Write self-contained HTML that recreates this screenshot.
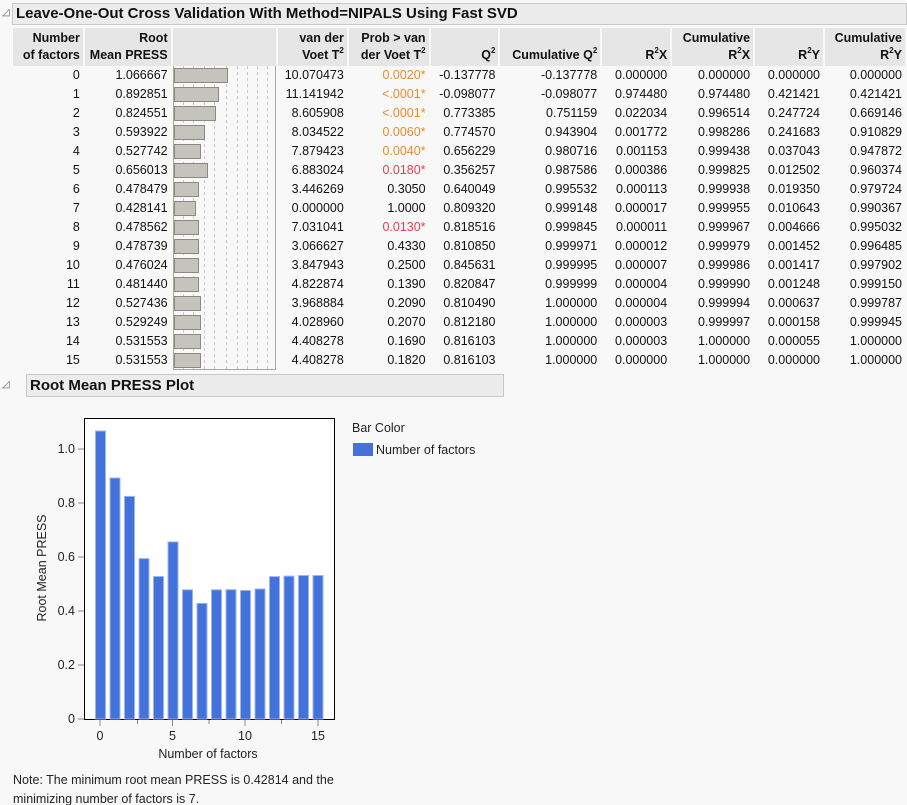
<!DOCTYPE html>
<html><head><meta charset="utf-8"><style>
body{margin:0;width:907px;height:805px;background:#f8f8f8;font-family:"Liberation Sans",sans-serif;font-size:12.5px;color:#111;position:relative;overflow:hidden}
.tb{position:absolute;background:#ececec;border:1px solid #c8c8c8;font-weight:bold;font-size:15px;line-height:20px;padding-left:3px;box-sizing:border-box}
.tri{position:absolute;font-size:10px;color:#666}
table{position:absolute;left:11px;top:28px;border-collapse:separate;border-spacing:2px 0;table-layout:fixed}
th{background:#e6e6e6;font-weight:bold;text-align:right;vertical-align:bottom;height:36px;padding:0 3px 2px 0;line-height:17px;font-size:12.5px;overflow:hidden}
td{height:19px;padding:0 3px 0 0;text-align:right;line-height:19px;white-space:nowrap;box-sizing:border-box}
.o{color:#ee8a2c}.r{color:#e63e4e}
td.b{padding:0;position:relative;border-left:1px solid #a8a8a0;border-right:1px solid #a8a8a0}
tr.last td.b{border-bottom:1px solid #a8a8a0}
.bar{position:absolute;left:0;top:2px;height:15px;background:#c4c4bc;border:1px solid #8a8a80;box-sizing:border-box}
sup{font-size:8px;vertical-align:top;line-height:0;position:relative;top:4px}
</style></head><body>
<div class="tri" style="left:2px;top:7px">◿</div>
<div class="tb" style="left:12px;top:3px;width:895px;height:22px">Leave-One-Out Cross Validation With Method=NIPALS Using Fast SVD</div>
<svg style="position:absolute;left:173px;top:66px" width="104" height="304">
<g stroke="#c8c8c8" stroke-dasharray="3,3"><line x1="10.5" y1="0" x2="10.5" y2="304"/><line x1="20.5" y1="0" x2="20.5" y2="304"/><line x1="31.5" y1="0" x2="31.5" y2="304"/><line x1="41.5" y1="0" x2="41.5" y2="304"/><line x1="53.5" y1="0" x2="53.5" y2="304"/><line x1="64.5" y1="0" x2="64.5" y2="304"/><line x1="74.5" y1="0" x2="74.5" y2="304"/><line x1="84.5" y1="0" x2="84.5" y2="304"/><line x1="94.5" y1="0" x2="94.5" y2="304"/></g></svg>
<table>
<colgroup><col style="width:70px"><col style="width:86px"><col style="width:104px"><col style="width:69px"><col style="width:80px"><col style="width:68px"><col style="width:100px"><col style="width:68px"><col style="width:81px"><col style="width:68px"><col style="width:80px"></colgroup>
<tr><th>Number<br>of factors</th><th>Root<br>Mean PRESS</th><th></th><th>van der<br>Voet T<sup>2</sup></th><th>Prob &gt; van<br>der Voet T<sup>2</sup></th><th>Q<sup>2</sup></th><th>Cumulative Q<sup>2</sup></th><th>R<sup>2</sup>X</th><th>Cumulative<br>R<sup>2</sup>X</th><th>R<sup>2</sup>Y</th><th>Cumulative<br>R<sup>2</sup>Y</th></tr>
<tr><td>0</td><td>1.066667</td><td class="b"><div class="bar" style="width:54px"></div></td><td>10.070473</td><td class="o">0.0020*</td><td>-0.137778</td><td>-0.137778</td><td>0.000000</td><td>0.000000</td><td>0.000000</td><td>0.000000</td></tr>
<tr><td>1</td><td>0.892851</td><td class="b"><div class="bar" style="width:45px"></div></td><td>11.141942</td><td class="o">&lt;.0001*</td><td>-0.098077</td><td>-0.098077</td><td>0.974480</td><td>0.974480</td><td>0.421421</td><td>0.421421</td></tr>
<tr><td>2</td><td>0.824551</td><td class="b"><div class="bar" style="width:42px"></div></td><td>8.605908</td><td class="o">&lt;.0001*</td><td>0.773385</td><td>0.751159</td><td>0.022034</td><td>0.996514</td><td>0.247724</td><td>0.669146</td></tr>
<tr><td>3</td><td>0.593922</td><td class="b"><div class="bar" style="width:31px"></div></td><td>8.034522</td><td class="o">0.0060*</td><td>0.774570</td><td>0.943904</td><td>0.001772</td><td>0.998286</td><td>0.241683</td><td>0.910829</td></tr>
<tr><td>4</td><td>0.527742</td><td class="b"><div class="bar" style="width:27px"></div></td><td>7.879423</td><td class="o">0.0040*</td><td>0.656229</td><td>0.980716</td><td>0.001153</td><td>0.999438</td><td>0.037043</td><td>0.947872</td></tr>
<tr><td>5</td><td>0.656013</td><td class="b"><div class="bar" style="width:34px"></div></td><td>6.883024</td><td class="r">0.0180*</td><td>0.356257</td><td>0.987586</td><td>0.000386</td><td>0.999825</td><td>0.012502</td><td>0.960374</td></tr>
<tr><td>6</td><td>0.478479</td><td class="b"><div class="bar" style="width:25px"></div></td><td>3.446269</td><td>0.3050</td><td>0.640049</td><td>0.995532</td><td>0.000113</td><td>0.999938</td><td>0.019350</td><td>0.979724</td></tr>
<tr><td>7</td><td>0.428141</td><td class="b"><div class="bar" style="width:22px"></div></td><td>0.000000</td><td>1.0000</td><td>0.809320</td><td>0.999148</td><td>0.000017</td><td>0.999955</td><td>0.010643</td><td>0.990367</td></tr>
<tr><td>8</td><td>0.478562</td><td class="b"><div class="bar" style="width:25px"></div></td><td>7.031041</td><td class="r">0.0130*</td><td>0.818516</td><td>0.999845</td><td>0.000011</td><td>0.999967</td><td>0.004666</td><td>0.995032</td></tr>
<tr><td>9</td><td>0.478739</td><td class="b"><div class="bar" style="width:25px"></div></td><td>3.066627</td><td>0.4330</td><td>0.810850</td><td>0.999971</td><td>0.000012</td><td>0.999979</td><td>0.001452</td><td>0.996485</td></tr>
<tr><td>10</td><td>0.476024</td><td class="b"><div class="bar" style="width:25px"></div></td><td>3.847943</td><td>0.2500</td><td>0.845631</td><td>0.999995</td><td>0.000007</td><td>0.999986</td><td>0.001417</td><td>0.997902</td></tr>
<tr><td>11</td><td>0.481440</td><td class="b"><div class="bar" style="width:25px"></div></td><td>4.822874</td><td>0.1390</td><td>0.820847</td><td>0.999999</td><td>0.000004</td><td>0.999990</td><td>0.001248</td><td>0.999150</td></tr>
<tr><td>12</td><td>0.527436</td><td class="b"><div class="bar" style="width:27px"></div></td><td>3.968884</td><td>0.2090</td><td>0.810490</td><td>1.000000</td><td>0.000004</td><td>0.999994</td><td>0.000637</td><td>0.999787</td></tr>
<tr><td>13</td><td>0.529249</td><td class="b"><div class="bar" style="width:27px"></div></td><td>4.028960</td><td>0.2070</td><td>0.812180</td><td>1.000000</td><td>0.000003</td><td>0.999997</td><td>0.000158</td><td>0.999945</td></tr>
<tr><td>14</td><td>0.531553</td><td class="b"><div class="bar" style="width:27px"></div></td><td>4.408278</td><td>0.1690</td><td>0.816103</td><td>1.000000</td><td>0.000003</td><td>1.000000</td><td>0.000055</td><td>1.000000</td></tr>
<tr class="last"><td>15</td><td>0.531553</td><td class="b"><div class="bar" style="width:27px"></div></td><td>4.408278</td><td>0.1820</td><td>0.816103</td><td>1.000000</td><td>0.000000</td><td>1.000000</td><td>0.000000</td><td>1.000000</td></tr>
</table>
<div class="tri" style="left:2px;top:379px">◿</div>
<div class="tb" style="left:26px;top:374px;width:478px;height:23px;line-height:21px">Root Mean PRESS Plot</div>
<svg style="position:absolute;left:0;top:400px" width="907" height="405" font-family="Liberation Sans" font-size="12.5" fill="#222">
<rect x="84.5" y="18.5" width="250" height="301" fill="#fff" stroke="#000"/>
<g fill="#4472dc" stroke="#9db4ec" stroke-width="1">
<rect x="95.5" y="31" width="10" height="288"/><rect x="110" y="78" width="10" height="241"/><rect x="124.5" y="96.4" width="10" height="222.6"/><rect x="139" y="158.6" width="10" height="160.4"/><rect x="153.5" y="176.5" width="10" height="142.5"/><rect x="168" y="141.9" width="10" height="177.1"/><rect x="182.5" y="189.8" width="10" height="129.2"/><rect x="197" y="203.4" width="10" height="115.6"/><rect x="211.5" y="189.8" width="10" height="129.2"/><rect x="226" y="189.7" width="10" height="129.3"/><rect x="240.5" y="190.5" width="10" height="128.5"/><rect x="255" y="189" width="10" height="130"/><rect x="269.5" y="176.6" width="10" height="142.4"/><rect x="284" y="176.1" width="10" height="142.9"/><rect x="298.5" y="175.5" width="10" height="143.5"/><rect x="313" y="175.5" width="10" height="143.5"/></g>
<g stroke="#888"><line x1="78" y1="49" x2="84" y2="49"/><line x1="78" y1="103" x2="84" y2="103"/><line x1="78" y1="157" x2="84" y2="157"/><line x1="78" y1="211" x2="84" y2="211"/><line x1="78" y1="265" x2="84" y2="265"/><line x1="78" y1="319" x2="84" y2="319"/>
<line x1="100" y1="320" x2="100" y2="326"/><line x1="137.5" y1="320" x2="137.5" y2="324"/><line x1="172.5" y1="320" x2="172.5" y2="326"/><line x1="209" y1="320" x2="209" y2="324"/><line x1="245" y1="320" x2="245" y2="326"/><line x1="281.5" y1="320" x2="281.5" y2="324"/><line x1="318" y1="320" x2="318" y2="326"/></g>
<g text-anchor="end"><text x="75" y="53">1.0</text><text x="75" y="107">0.8</text><text x="75" y="161">0.6</text><text x="75" y="215">0.4</text><text x="75" y="269">0.2</text><text x="75" y="323">0</text></g>
<g text-anchor="middle"><text x="100" y="340">0</text><text x="172.5" y="340">5</text><text x="245" y="340">10</text><text x="318" y="340">15</text><text x="208" y="358">Number of factors</text>
<text transform="translate(46,168) rotate(-90)">Root Mean PRESS</text></g>
<text x="352" y="32">Bar Color</text>
<rect x="353" y="43" width="20" height="13" fill="#4472dc"/>
<text x="376" y="54">Number of factors</text>
<text x="13" y="384">Note: The minimum root mean PRESS is 0.42814 and the</text>
<text x="13" y="403">minimizing number of factors is 7.</text>
</svg>
</body></html>
